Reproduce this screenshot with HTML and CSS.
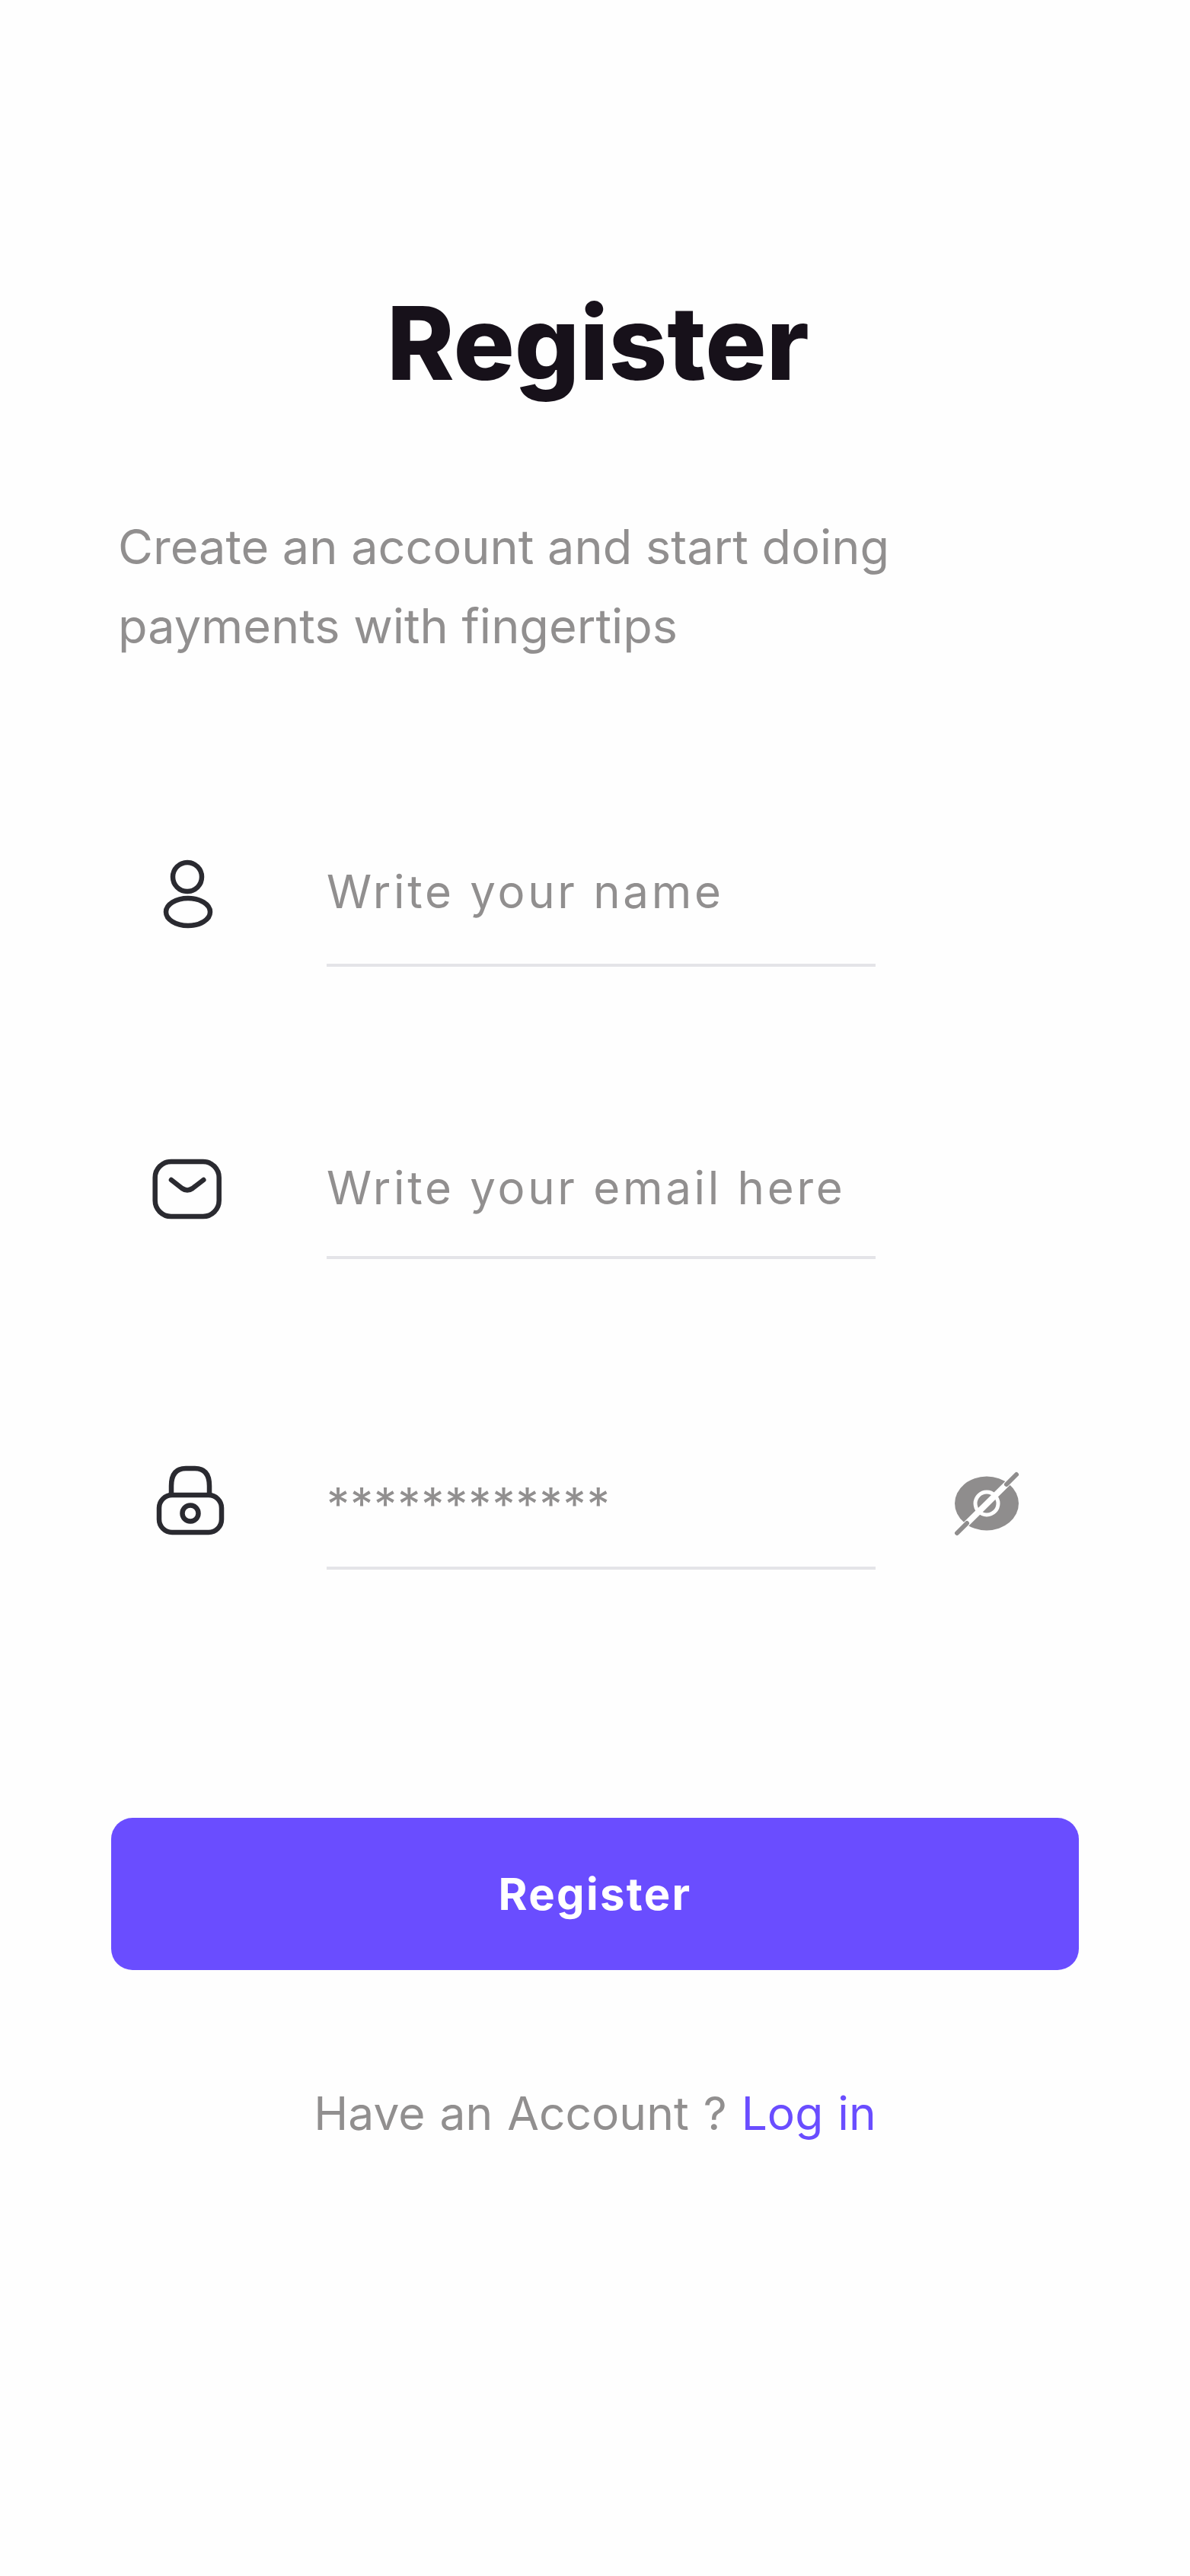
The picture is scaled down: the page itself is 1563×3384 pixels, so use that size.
FILE: index.html
```html
<!DOCTYPE html>
<html>
<head>
    <title>Register</title>
    <link rel="stylesheet" href="styles.css">
</head>
<body>
    <div class="page">
        <h1 class="title">Register</h1>
        <p class="intro">Create an account and start doing<br>payments with fingertips</p>

        <form class="fields">
            <div class="field field-name">
                <svg class="icon" width="100" height="120" viewBox="0 0 100 120" fill="none" stroke="#2a2a30" stroke-width="6.5">
                    <circle cx="46" cy="42" r="19"/>
                    <ellipse cx="47" cy="88" rx="29" ry="18"/>
                </svg>
                <div class="field-line">Write your name</div>
            </div>

            <div class="field field-email">
                <svg class="icon" width="100" height="120" viewBox="0 0 100 120" fill="none" stroke="#2a2a30" stroke-width="6.5" stroke-linecap="round" stroke-linejoin="round">
                    <rect x="3.7" y="32" width="84" height="72" rx="21"/>
                    <path d="M25 56 L39 67 Q46 72 53 67 L67.3 56"/>
                </svg>
                <div class="field-line">Write your email here</div>
            </div>

            <div class="field field-password">
                <svg class="icon" width="100" height="120" viewBox="0 0 100 120" fill="none" stroke="#2a2a30" stroke-width="6.5">
                    <rect x="9" y="62" width="82" height="49" rx="17"/>
                    <path d="M25 62 V50 Q25 27 44 27 H56 Q75 27 75 50 V62"/>
                    <circle cx="50" cy="86" r="10.5"/>
                </svg>
                <div class="field-line field-stars">************</div>
                <svg class="eye" width="100" height="120" viewBox="0 0 100 120" fill="none" stroke-linecap="round">
                    <ellipse cx="50" cy="73" rx="42" ry="35.5" fill="#8f8d8d"/>
                    <circle cx="50" cy="73" r="15" stroke="#fff" stroke-width="5"/>
                    <path d="M89 35 L11 112" stroke="#fff" stroke-width="8"/>
                    <path d="M89 35 L76 48" stroke="#8f8d8d" stroke-width="6"/>
                    <path d="M24 99 L11 112" stroke="#8f8d8d" stroke-width="6"/>
                </svg>
            </div>
        </form>

        <button class="submit" type="button">Register</button>
        <p class="login">Have an Account ? <a href="#">Log in</a></p>
    </div>
</body>
</html>
```

FILE: styles.css
```css
body {
    margin: 0;
    background-color: #fefefe;
    font-family: Inter, "Noto Sans", sans-serif;
    color: #918f8f;
}

.page {
    width: 1563px;
    height: 3384px;
    box-sizing: border-box;
    padding: 0 146px;
    overflow: hidden;
}

.title {
    margin: 0;
    padding: 370px 0 0 8px;
    font-size: 134px;
    line-height: 160px;
    font-weight: 800;
    text-align: center;
    color: #17111a;
}

.intro {
    margin: 136px 0 0 9px;
    font-size: 63px;
    line-height: 104px;
}

/* Rows end on the underline */
.field {
    display: flex;
    height: 160px;
}

.field-name {
    margin-top: 236px;
}

.field-email {
    margin-top: 224px;
}

.field-password {
    margin-top: 248px;
}

.icon {
    flex: none;
    margin: 0 129px 0 54px;
}

.field-line {
    flex: none;
    box-sizing: border-box;
    width: 721px;
    height: 160px;
    padding-top: 26px;
    border-bottom: 4px solid #e4e4e8;
    font-size: 60px;
    line-height: 70px;
    letter-spacing: 3.7px;
}

.field-email .field-line {
    padding-top: 31px;
}

.field-stars {
    padding-top: 39px;
    letter-spacing: 1px;
}

.eye {
    flex: none;
    margin-left: 96px;
}

.submit {
    display: block;
    width: 1271px;
    height: 200px;
    margin-top: 326px;
    border: none;
    border-radius: 28px;
    background-color: #6a4dff;
    color: #fff;
    font-family: Inter, sans-serif;
    font-size: 58px;
    font-weight: 700;
    letter-spacing: 2.3px;
}

.login {
    margin: 148px 0 0;
    font-size: 60.5px;
    line-height: 80px;
    word-spacing: 2px;
    text-align: center;
}

.login a {
    color: #6a4dff;
    text-decoration: none;
}
```
